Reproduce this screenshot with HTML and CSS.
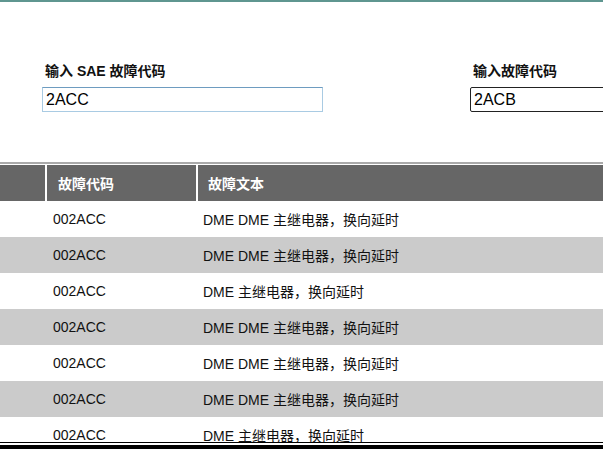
FILE: index.html
```html
<!DOCTYPE html>
<html lang="zh-CN">
<head>
  <meta charset="UTF-8">
  <title>故障代码</title>
  <link rel="stylesheet" href="styles.css">
</head>
<body>

  <div class="topbar"></div>

  <form class="search">
    <div class="field">
      <label for="sae">输入 SAE 故障代码</label>
      <input id="sae" class="input-sae" type="text" value="2ACC">
    </div>
    <div class="field">
      <label for="code">输入故障代码</label>
      <input id="code" class="input-code" type="text" value="2ACB">
    </div>
  </form>

  <div class="results">
    <table class="codes">
      <colgroup>
        <col class="col-sel">
        <col class="col-code">
        <col>
      </colgroup>
      <thead>
        <tr>
          <th></th>
          <th>故障代码</th>
          <th class="text">故障文本</th>
        </tr>
      </thead>
      <tbody>
        <tr><td></td><td>002ACC</td><td class="text">DME DME 主继电器，换向延时</td></tr>
        <tr><td></td><td>002ACC</td><td class="text">DME DME 主继电器，换向延时</td></tr>
        <tr><td></td><td>002ACC</td><td class="text">DME 主继电器，换向延时</td></tr>
        <tr><td></td><td>002ACC</td><td class="text">DME DME 主继电器，换向延时</td></tr>
        <tr><td></td><td>002ACC</td><td class="text">DME DME 主继电器，换向延时</td></tr>
        <tr><td></td><td>002ACC</td><td class="text">DME DME 主继电器，换向延时</td></tr>
        <tr><td></td><td>002ACC</td><td class="text">DME 主继电器，换向延时</td></tr>
      </tbody>
    </table>
  </div>

  <div class="bottom"></div>

</body>
</html>
```

FILE: styles.css
```css
body {
  margin: 0;
  font-family: "Liberation Sans", "Noto Sans CJK SC", sans-serif;
  color: #111;
  background: #fff;
  overflow: hidden;
}

.topbar {
  height: 2px;
  background-color: #5f9690;
}

.search {
  display: flex;
  gap: 147px;
  padding: 60px 0 0 42px;
  height: 160px;
  box-sizing: border-box;
  margin: 0;
}

.field {
  display: flex;
  flex-direction: column;
  flex-shrink: 0;
}

.field label {
  font-size: 14px;
  font-weight: bold;
  line-height: 18px;
  padding-left: 3px;
  margin-bottom: 7px;
  color: #111;
}

.field input {
  width: 281px;
  height: 25px;
  box-sizing: border-box;
  margin: 0;
  padding: 0 3px;
  font-family: "Liberation Sans", sans-serif;
  font-size: 16px;
  color: #000;
  outline: none;
}

.input-sae {
  border: 1px solid #a9cbe3;
  border-top-color: #6e9cc0;
}

.input-code {
  border: 1px solid #222;
  border-radius: 2px;
}

/* results table */
.results {
  border-top: 2px solid #aaa;
  padding-top: 1px;
  height: 277px;
  overflow: hidden;
  border-bottom: 1px solid #000;
}

.codes {
  width: 100%;
  border-collapse: separate;
  border-spacing: 0;
  table-layout: fixed;
}

.col-sel {
  width: 45px;
}

.col-code {
  width: 151px;
}

.codes th {
  height: 36px;
  padding: 0 0 0 11px;
  background-color: #666;
  color: #fff;
  font-size: 14px;
  font-weight: bold;
  text-align: left;
  border-left: 2px solid #fff;
}

.codes th:first-child {
  border-left: none;
  padding: 0;
}

.codes th.text {
  padding-left: 10px;
}

.codes td {
  height: 36px;
  padding: 0 0 0 8px;
  font-size: 14px;
  white-space: nowrap;
}

.codes td.text {
  padding-left: 7px;
}

.codes td:first-child {
  padding: 0;
}

.codes tbody tr:nth-child(even) td {
  background-color: #cbcbcb;
}

.bottom {
  margin-top: 2px;
  height: 10px;
  background-color: #000;
}
```
